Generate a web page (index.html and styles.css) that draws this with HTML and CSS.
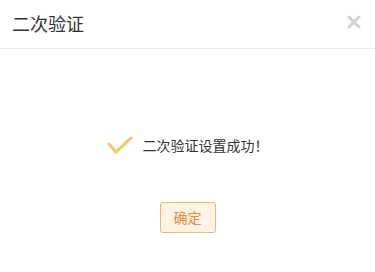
FILE: index.html
```html
<!DOCTYPE html>
<html lang="zh">
<head>
<meta charset="utf-8">
<link rel="stylesheet" href="styles.css">
</head>
<body>
<div class="dialog">
  <div class="dialog-header">
    <span class="dialog-title">二次验证</span>
    <span class="dialog-close">
      <svg width="14" height="14" viewBox="0 0 14 14"><path d="M2 2 L12 12 M12 2 L2 12" stroke="#d2d2d2" stroke-width="3" stroke-linecap="round"/></svg>
    </span>
  </div>
  <div class="dialog-body">
    <div class="message">
      <svg class="check" width="26" height="20" viewBox="0 0 26 20"><path d="M2 8 L9 16 L24 2" fill="none" stroke="#f8c75c" stroke-width="3" stroke-linecap="round" stroke-linejoin="round"/></svg>
      <span class="message-text">二次验证设置成功！</span>
    </div>
    <button class="btn-ok">确定</button>
  </div>
</div>
</body>
</html>
```
FILE: styles.css
```css
html, body {
  margin: 0;
  padding: 0;
  background: #fff;
}
body {
  font-family: "Noto Sans CJK SC", "Noto Sans", sans-serif;
  color: #333;
}
.dialog {
  width: 375px;
  height: 272px;
  background: #fff;
}
.dialog-header {
  height: 48px;
  border-bottom: 1px solid #ebebeb;
  display: flex;
  align-items: center;
  justify-content: space-between;
  padding: 0 14px 0 12px;
}
.dialog-title {
  font-size: 18px;
  line-height: 24px;
  color: #333;
  margin-top: -2px;
}
.dialog-close {
  display: flex;
  margin-top: -4px;
}
.dialog-body {
  display: flex;
  flex-direction: column;
  align-items: center;
  padding-top: 84px;
}
.message {
  display: flex;
  align-items: center;
  gap: 10px;
  height: 24px;
}
.check {
  display: block;
  margin-top: 2px;
}
.message-text {
  font-size: 14px;
  line-height: 24px;
  color: #333;
}
.btn-ok {
  margin-top: 45px;
  width: 56px;
  height: 31px;
  padding: 0;
  border: 1px solid #f5b670;
  border-radius: 3px;
  background: #fff4e3;
  color: #e8893a;
  font-family: "Noto Sans CJK SC", sans-serif;
  font-size: 14px;
  line-height: 29px;
}
```
